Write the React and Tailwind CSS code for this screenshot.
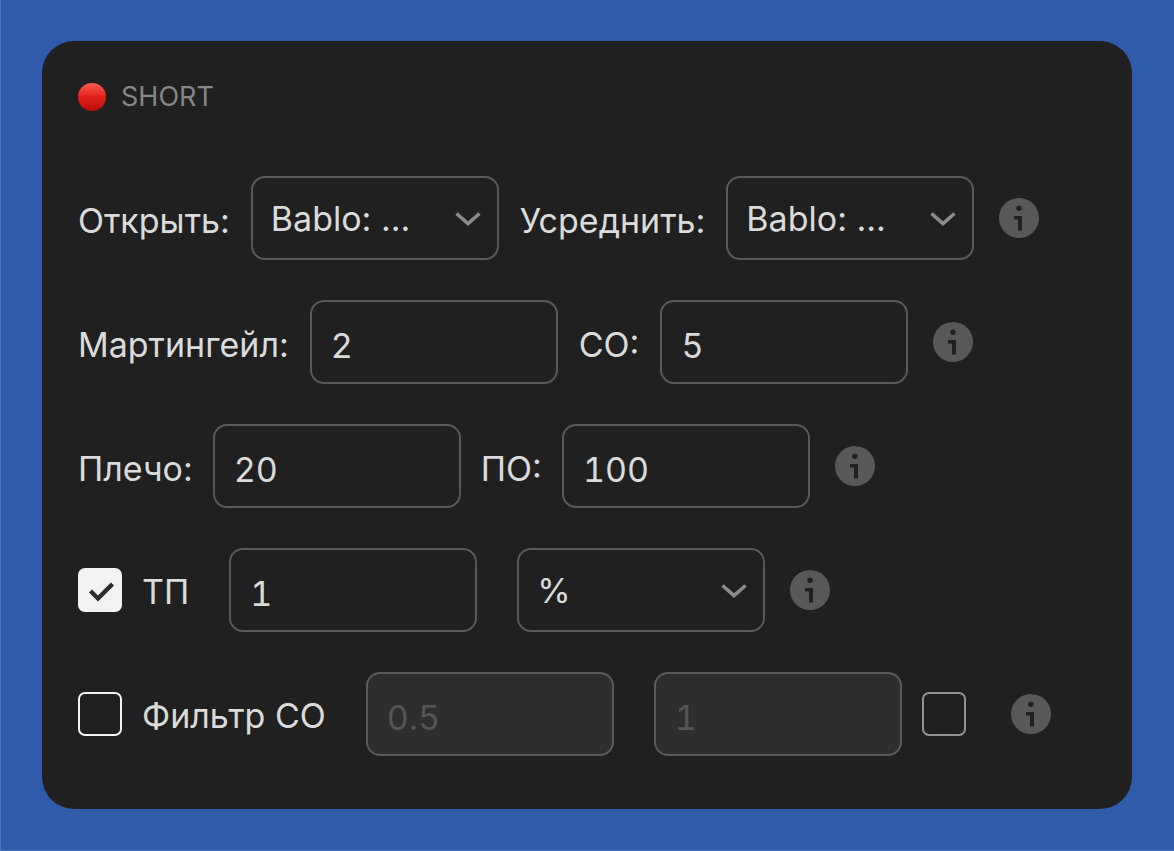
import React, { useState } from 'react'

const Chevron = () => (
  <svg
    className="absolute right-[18px] top-1/2 -translate-y-1/2 w-[26px] h-4 pointer-events-none"
    viewBox="0 0 26 16"
    fill="none"
    stroke="#8c8c8c"
    strokeWidth="3.6"
    aria-hidden="true"
  >
    <path d="M1.5 3.5 13 13.5 24.5 3.5" />
  </svg>
)

const InfoButton = ({ className = "ml-[25px]" }) => (
  <button type="button" aria-label="Info" className={`shrink-0 ${className}`}>
    <svg className="w-10 h-10" viewBox="0 0 40 40" aria-hidden="true">
      <circle cx="20" cy="20" r="20" fill="#585858" />
      <circle cx="20" cy="10.2" r="2.7" fill="#202020" />
      <path d="M15 18h8v14.5h-4v-11h-4z" fill="#202020" />
    </svg>
  </button>
)

const Label = ({ htmlFor, className = "", children }) => (
  <label htmlFor={htmlFor} className={`shrink-0 whitespace-nowrap pt-1.5 ${className}`}>
    {children}
  </label>
)

const TextField = ({ id, value, label, disabled = false, className = "" }) => (
  <input
    id={id}
    type="text"
    aria-label={label}
    defaultValue={value}
    disabled={disabled}
    className={`w-[248px] h-[84px] min-w-0 rounded-[14px] border-2 border-[#595959] bg-transparent px-[19px] pt-1.5 tabular-nums outline-none disabled:bg-[#2e2e2e] disabled:text-[#555555] ${className}`}
  />
)

const SelectField = ({ id, options, label, className = "" }) => (
  <div className={`relative w-[248px] min-w-0 ${className}`}>
    <select
      id={id}
      aria-label={label}
      className="w-full h-[84px] appearance-none rounded-[14px] border-2 border-[#595959] bg-[#202020] pl-[18px] pr-14 pt-0.5 outline-none"
    >
      {options.map((option) => (
        <option key={option}>{option}</option>
      ))}
    </select>
    <Chevron />
  </div>
)

const Checkbox = ({ id, label, checked, onChange, disabled = false, className = "" }) => (
  <span className={`relative shrink-0 w-11 h-11 ${className}`}>
    <input
      id={id}
      type="checkbox"
      aria-label={label}
      checked={checked}
      onChange={onChange}
      disabled={disabled}
      className="block w-11 h-11 appearance-none rounded-[7px] border-2 border-[#f2f2f2] checked:bg-[#f2f2f2] disabled:border-[#929292]"
    />
    {checked && (
      <svg
        className="absolute inset-0 w-11 h-11 pointer-events-none"
        viewBox="0 0 44 44"
        fill="none"
        stroke="#2b2b2b"
        strokeWidth="4.4"
        aria-hidden="true"
      >
        <path d="M12.5 23 20 30.5 34.5 16" />
      </svg>
    )}
  </span>
)

const App = () => {
  const [takeProfit, setTakeProfit] = useState(true)
  const [filter, setFilter] = useState(false)

  return (
    <main className="min-h-screen bg-[#305bab] border-l border-b border-[#4a73bd] pl-[41px] pr-[42px] py-[41px] font-['Inter',sans-serif]">
      <form className="rounded-[32px] bg-[#202020] px-9 pt-9 pb-[53px] text-[34px] leading-10 text-[#dbdbdb]">
        <h1 className="flex items-center gap-[15px] text-[27px] leading-10 text-[#868686]">
          <span className="w-7 h-7 rounded-full bg-linear-to-b from-[#ff5a50] via-[#e01e18] to-[#b80f0c]"></span>
          SHORT
        </h1>

        <div className="mt-[59px] flex flex-col gap-10">
          <div className="flex items-center">
            <Label htmlFor="open">Открыть:</Label>
            <SelectField id="open" options={["Bablo: ..."]} className="ml-[21px]" />
            <Label htmlFor="average" className="ml-[21px]">Усреднить:</Label>
            <SelectField id="average" options={["Bablo: ..."]} className="ml-[21px]" />
            <InfoButton />
          </div>

          <div className="flex items-center">
            <Label htmlFor="martingale">Мартингейл:</Label>
            <TextField id="martingale" value="2" className="ml-[21px]" />
            <Label htmlFor="so" className="ml-[21px]">СО:</Label>
            <TextField id="so" value="5" className="ml-[21px]" />
            <InfoButton />
          </div>

          <div className="flex items-center">
            <Label htmlFor="leverage">Плечо:</Label>
            <TextField id="leverage" value="20" className="ml-5" />
            <Label htmlFor="po" className="ml-5">ПО:</Label>
            <TextField id="po" value="100" className="ml-5" />
            <InfoButton />
          </div>

          <div className="flex items-center">
            <Checkbox id="tp" checked={takeProfit} onChange={() => setTakeProfit(!takeProfit)} />
            <label htmlFor="tp" className="ml-5 shrink-0 pt-1">ТП</label>
            <TextField label="ТП" value="1" className="ml-10" />
            <SelectField label="ТП %" options={["%"]} className="ml-10" />
            <InfoButton />
          </div>

          <div className="flex items-center">
            <Checkbox id="filter" checked={filter} onChange={() => setFilter(!filter)} />
            <label htmlFor="filter" className="ml-5 shrink-0 whitespace-nowrap pt-1">Фильтр СО</label>
            <TextField label="Фильтр СО от" value="0.5" disabled={!filter} className="ml-10" />
            <TextField label="Фильтр СО до" value="1" disabled={!filter} className="ml-10" />
            <Checkbox label="Фильтр СО 2" checked={false} disabled className="ml-5" />
            <InfoButton className="ml-[45px]" />
          </div>
        </div>
      </form>
    </main>
  )
}

export default App
